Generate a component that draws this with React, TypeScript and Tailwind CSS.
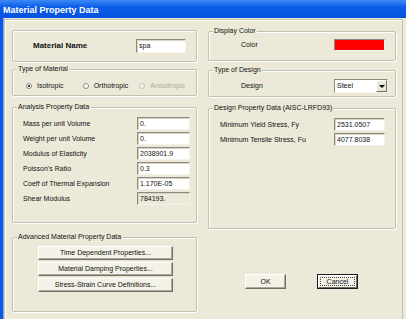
import React from "react";

function Group(props: { title: string; className: string; children?: React.ReactNode }) {
  return (
    <div
      className={
        "flex flex-col border border-[#c3c0ae] rounded-[2px] shadow-[inset_1px_1px_0_#fff,1px_1px_0_#fff] " +
        props.className
      }
    >
      <span className="-mt-[5px] ml-[4px] px-[1px] self-start bg-[#ece9d8] leading-[8px]">{props.title}</span>
      {props.children}
    </div>
  );
}

function Field(props: { value: string; className: string; disabled?: boolean }) {
  return (
    <div
      className={
        "h-[13px] flex items-center pl-[2px] border border-[#f4f2ea] border-t-[#8d8b80] border-l-[#8d8b80] shadow-[inset_1px_1px_0_#d6d3c4] " +
        (props.disabled ? "bg-[#ece9d8] " : "bg-white ") +
        props.className
      }
    >
      {props.value}
    </div>
  );
}

function Button(props: { label: string; className: string }) {
  return (
    <div
      className={
        "h-[14px] flex items-center justify-center bg-[#f3f1e8] border border-white border-r-[#716f64] border-b-[#716f64] shadow-[inset_-1px_-1px_0_#aca899] " +
        props.className
      }
    >
      {props.label}
    </div>
  );
}

function Radio(props: { label: string; checked?: boolean; disabled?: boolean }) {
  return (
    <div className={"w-[59px] flex items-center gap-[5px] " + (props.disabled ? "text-[#aca899]" : "")}>
      <span
        className={
          "w-[6px] h-[6px] rounded-full border flex items-center justify-center " +
          (props.disabled ? "border-[#cac8bb] bg-[#f2f0e8]" : "border-[#8c8a80] bg-white")
        }
      >
        {props.checked && <span className="w-[2px] h-[2px] rounded-full bg-black" />}
      </span>
      <span>{props.label}</span>
    </div>
  );
}

const analysisRows = [
  { label: "Mass per unit Volume", value: "0." },
  { label: "Weight per unit Volume", value: "0." },
  { label: "Modulus of Elasticity", value: "2038901.9" },
  { label: "Poisson's Ratio", value: "0.3" },
  { label: "Coeff of Thermal Expansion", value: "1.170E-05" },
  { label: "Shear Modulus", value: "784193.", disabled: true },
];

export default function App() {
  return (
    <div className="w-[406px] h-[319px] overflow-hidden bg-[#ece9d8] flex flex-col font-['Liberation_Sans',Arial,sans-serif] text-[7px] leading-[8px] text-[#111]">
      {/* title bar */}
      <div className="h-[18px] shrink-0 flex items-center pl-[3px] pt-[2px] bg-[linear-gradient(#3d8af7,#0a5ce9_40%,#0553e0)]">
        <span className="text-white font-bold text-[9px] leading-[10px]">Material Property Data</span>
      </div>

      <div className="flex flex-1 min-h-0">
        <div className="w-[4px] bg-[#0a57e2] border-r border-[#8fb0ec]" />
        <div className="flex-1 mt-[1px] mr-[3px] flex gap-[11px] pl-[7px] pr-[6px] border border-b-0 border-[#c3c0ae] shadow-[inset_1px_1px_0_#fff]">
          {/* left column */}
          <div className="w-[185px] pt-[10px] flex flex-col">
            <div className="h-[32px] flex items-center justify-between pl-[20px] pr-[10px] border border-[#c3c0ae] rounded-[2px] shadow-[inset_1px_1px_0_#fff,1px_1px_0_#fff]">
              <span className="font-bold text-[8px]">Material Name</span>
              <Field value="spa" className="w-[50px] h-[14px]" />
            </div>

            <Group title="Type of Material" className="mt-[7px] h-[27px]">
              <div className="mt-[9px] pl-[13px] flex">
                <Radio label="Isotropic" checked />
                <Radio label="Orthotropic" />
                <Radio label="Anisotropic" disabled />
              </div>
            </Group>

            <Group title="Analysis Property Data" className="mt-[11px] h-[116px]">
              <div className="mt-[6px] flex flex-col gap-[2px] pl-[10px] pr-[6px]">
                {analysisRows.map((r) => (
                  <div key={r.label} className="flex items-center justify-between">
                    <span>{r.label}</span>
                    <Field value={r.value} disabled={r.disabled} className="w-[53px]" />
                  </div>
                ))}
              </div>
            </Group>

            <Group title="Advanced Material Property Data" className="mt-[14px] h-[75px]">
              <div className="mt-[5px] ml-[25px] flex flex-col gap-[2px]">
                <Button label="Time Dependent Properties..." className="w-[135px]" />
                <Button label="Material Damping Properties..." className="w-[135px]" />
                <Button label="Stress-Strain Curve Definitions..." className="w-[135px]" />
              </div>
            </Group>
          </div>

          {/* right column */}
          <div className="w-[188px] pt-[11px] flex flex-col">
            <Group title="Display Color" className="h-[30px]">
              <div className="mt-[4px] flex items-center justify-between pl-[32px] pr-[10px]">
                <span>Color</span>
                <div className="w-[51px] h-[12px] bg-[#ff0000] border border-[#f4f2ea] border-t-[#8d8b80] border-l-[#8d8b80]" />
              </div>
            </Group>

            <Group title="Type of Design" className="mt-[9px] h-[27px]">
              <div className="mt-[5px] flex items-center justify-between pl-[32px] pr-[7px]">
                <span>Design</span>
                <div className="w-[54px] h-[14px] flex bg-white border border-[#f4f2ea] border-t-[#8d8b80] border-l-[#8d8b80]">
                  <span className="flex-1 flex items-center pl-[2px]">Steel</span>
                  <span className="w-[11px] flex items-center justify-center bg-[#ece9d8] border border-white border-r-[#716f64] border-b-[#716f64]">
                    <span className="w-0 h-0 border-l-[3px] border-r-[3px] border-t-[3px] border-l-transparent border-r-transparent border-t-black" />
                  </span>
                </div>
              </div>
            </Group>

            <Group title="Design Property Data (AISC-LRFD93)" className="mt-[11px] h-[121px]">
              <div className="mt-[6px] flex flex-col gap-[2px] pl-[11px] pr-[10px]">
                <div className="flex items-center justify-between">
                  <span>Minimum Yield Stress, Fy</span>
                  <Field value="2531.0507" className="w-[51px]" />
                </div>
                <div className="flex items-center justify-between">
                  <span>Minimum Tensile Stress, Fu</span>
                  <Field value="4077.8038" className="w-[51px]" />
                </div>
              </div>
            </Group>

            <div className="mt-[45px] pl-[37px] flex gap-[31px]">
              <Button label="OK" className="w-[41px] h-[15px]" />
              <div className="w-[41px] h-[15px] border border-[#1c1c1c] flex">
                <div className="flex-1 flex items-center justify-center bg-[#f3f1e8] border border-white border-r-[#716f64] border-b-[#716f64] p-[1px]">
                  <span className="w-full h-full flex items-center justify-center border border-dotted border-[#444]">Cancel</span>
                </div>
              </div>
            </div>
          </div>
        </div>
      </div>
    </div>
  );
}
